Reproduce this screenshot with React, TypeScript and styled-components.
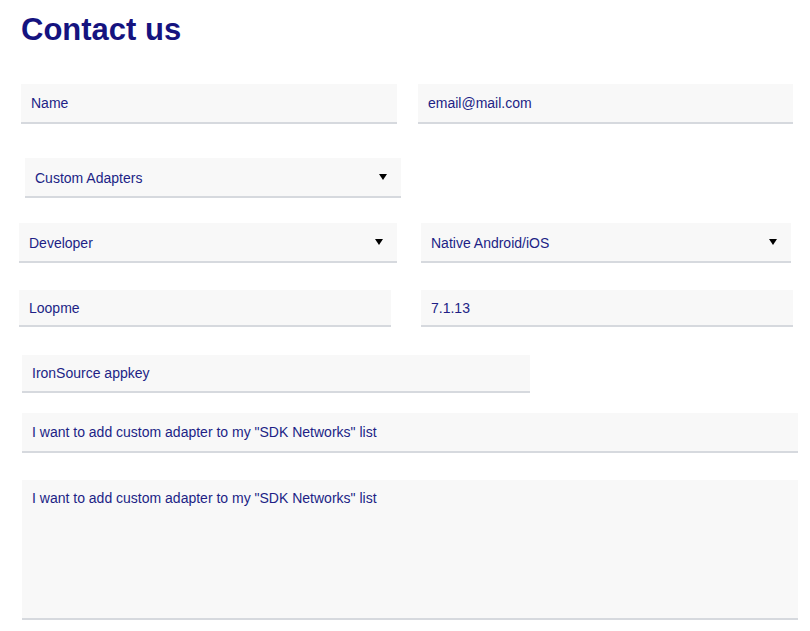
import React from "react";
import styled, { createGlobalStyle } from "styled-components";

const GlobalStyle = createGlobalStyle`
  body {
    margin: 0;
    background: #ffffff;
    font-family: "Liberation Sans", Arial, sans-serif;
  }
`;

const Page = styled.div`
  width: 810px;
  height: 631px;
  overflow: hidden;
  box-sizing: border-box;
`;

const Title = styled.h1`
  margin: 12px 0 0 21px;
  font-size: 31px;
  line-height: 36px;
  font-weight: 700;
  color: #15137f;
`;

const Row = styled.div<{ $top: number; $left: number; $gap?: number }>`
  display: flex;
  align-items: flex-start;
  margin-top: ${(props) => props.$top}px;
  padding-left: ${(props) => props.$left}px;
  gap: ${(props) => props.$gap || 0}px;
`;

const fieldBase = `
  box-sizing: border-box;
  background: #f8f8f8;
  border: none;
  border-bottom: 2px solid #d6d9de;
  font-family: "Liberation Sans", Arial, sans-serif;
  font-size: 14px;
  color: #211f86;
  outline: none;
  padding: 0 10px;
`;

const Input = styled.input<{ $w: number; $h?: number }>`
  ${fieldBase}
  width: ${(props) => props.$w}px;
  height: ${(props) => props.$h || 40}px;
`;

const TextArea = styled.textarea<{ $w: number; $h: number }>`
  ${fieldBase}
  display: block;
  width: ${(props) => props.$w}px;
  height: ${(props) => props.$h}px;
  padding: 10px 10px;
  line-height: 16px;
  resize: none;
`;

const SelectBox = styled.div<{ $w: number }>`
  ${fieldBase}
  position: relative;
  display: flex;
  align-items: center;
  padding-top: 2px;
  width: ${(props) => props.$w}px;
  height: 40px;
  cursor: pointer;
`;

const Arrow = styled.span`
  position: absolute;
  right: 14px;
  top: 16px;
  width: 0;
  height: 0;
  border-left: 4px solid transparent;
  border-right: 4px solid transparent;
  border-top: 6px solid #000000;
`;

const Select = (props: { w: number; value: string }) => (
  <SelectBox $w={props.w}>
    {props.value}
    <Arrow />
  </SelectBox>
);

const note = 'I want to add custom adapter to my "SDK Networks" list';

const App = () => {
  return (
    <Page>
      <GlobalStyle />
      <Title>Contact us</Title>
      <Row $top={36} $left={21} $gap={21}>
        <Input $w={376} defaultValue="Name" />
        <Input $w={375} defaultValue="email@mail.com" />
      </Row>
      <Row $top={34} $left={25}>
        <Select w={376} value="Custom Adapters" />
      </Row>
      <Row $top={25} $left={19} $gap={24}>
        <Select w={378} value="Developer" />
        <Select w={370} value="Native Android/iOS" />
      </Row>
      <Row $top={27} $left={19} $gap={30}>
        <Input $w={372} $h={37} defaultValue="Loopme" />
        <Input $w={372} $h={37} defaultValue="7.1.13" />
      </Row>
      <Row $top={28} $left={22}>
        <Input $w={508} $h={38} defaultValue="IronSource appkey" />
      </Row>
      <Row $top={20} $left={22}>
        <Input $w={776} defaultValue={note} />
      </Row>
      <Row $top={27} $left={22}>
        <TextArea $w={776} $h={140} defaultValue={note} />
      </Row>
    </Page>
  );
};

export default App;
